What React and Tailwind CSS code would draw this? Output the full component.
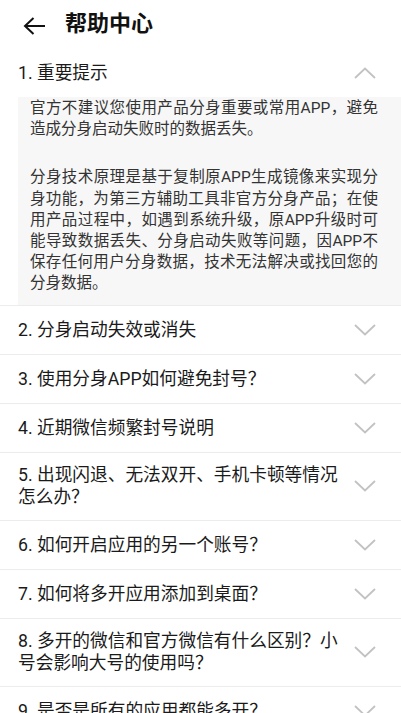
import React from "react";

const items = [
  "2. 分身启动失效或消失",
  "3. 使用分身APP如何避免封号？",
  "4. 近期微信频繁封号说明",
  "5. 出现闪退、无法双开、手机卡顿等情况怎么办？",
  "6. 如何开启应用的另一个账号？",
  "7. 如何将多开应用添加到桌面？",
  "8. 多开的微信和官方微信有什么区别？小号会影响大号的使用吗？",
  "9. 是否是所有的应用都能多开？",
];

function Chevron({ up }) {
  return (
    <svg width="22" height="12" viewBox="0 0 22 12" className="shrink-0">
      <polyline
        points={up ? "1,11 11,1.5 21,11" : "1,1 11,10.5 21,1"}
        fill="none"
        stroke="#c2c2c2"
        strokeWidth="1.8"
      />
    </svg>
  );
}

export default function App() {
  return (
    <div
      className="w-[401px] h-[713px] overflow-hidden bg-white text-[#1a1a1a]"
      style={{ fontFamily: 'Roboto, "Noto Sans CJK SC", sans-serif' }}
    >
      <div className="h-[48px] flex items-center pl-[23px]">
        <svg width="23" height="18" viewBox="0 0 23 18" className="mt-[3px]">
          <path d="M2 9 H22 M10.5 1 L2 9 L10.5 17" fill="none" stroke="#111" strokeWidth="2" />
        </svg>
        <div className="ml-[19px] text-[22px] leading-[26px] font-bold text-[#111]">帮助中心</div>
      </div>

      <div className="flex items-center justify-between min-h-[49px] pl-[18px] pr-[25px]">
        <div className="w-[330px] text-[17.7px] leading-[22px]">1. 重要提示</div>
        <Chevron up />
      </div>
      <div className="ml-[18px] bg-[#f7f7f7] pl-[12px] pr-[23px] pt-[1px] pb-[10px] text-[15.5px] leading-[21.2px] text-[#333] text-justify">
        <p>官方不建议您使用产品分身重要或常用APP，避免造成分身启动失败时的数据丢失。</p>
        <p className="mt-[27px]">
          分身技术原理是基于复制原APP生成镜像来实现分身功能，为第三方辅助工具非官方分身产品；在使用产品过程中，如遇到系统升级，原APP升级时可能导致数据丢失、分身启动失败等问题，因APP不保存任何用户分身数据，技术无法解决或找回您的分身数据。
        </p>
      </div>

      {items.map((t) => (
        <div
          key={t}
          className="flex items-center justify-between min-h-[49px] py-[11.5px] pl-[18px] pr-[25px] border-t border-[#ececec]"
        >
          <div className="w-[330px] text-[17.7px] leading-[22px]">{t}</div>
          <Chevron />
        </div>
      ))}
    </div>
  );
}
